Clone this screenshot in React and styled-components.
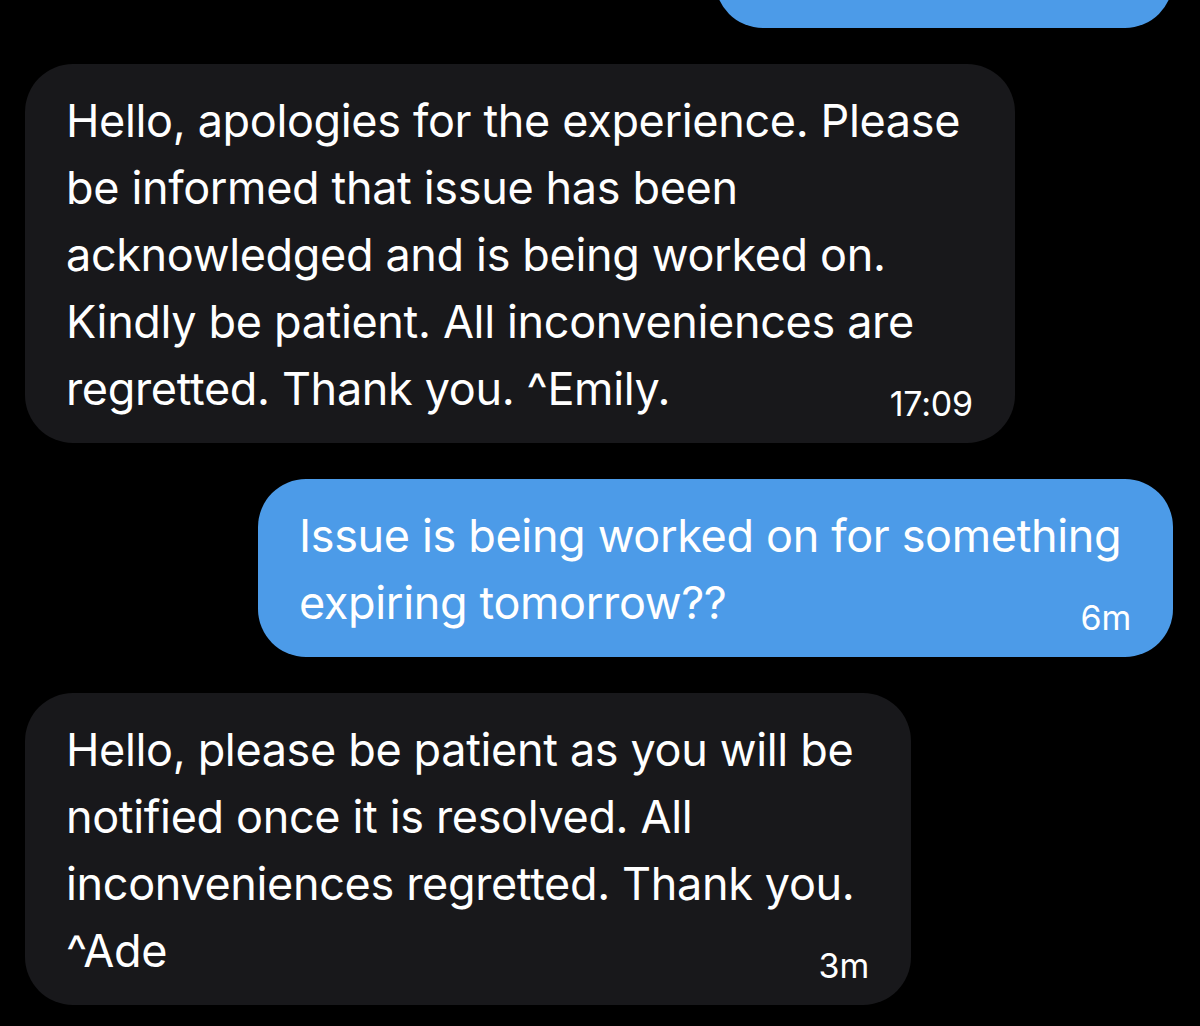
import React from 'react'
import styled, { createGlobalStyle } from 'styled-components'

const GlobalStyle = createGlobalStyle`
  html, body {
    margin: 0;
    padding: 0;
    background: #000;
  }
  body {
    font-family: Inter, "Noto Sans", sans-serif;
    -webkit-font-smoothing: antialiased;
  }
`

// chat is anchored to the bottom, older messages scroll off the top
const Screen = styled.div`
  height: 1026px;
  overflow: hidden;
  box-sizing: border-box;
  display: flex;
  flex-direction: column;
  justify-content: flex-end;
  gap: 36px;
  padding: 0 27px 21px 25px;
`

const Bubble = styled.div`
  flex-shrink: 0;
  align-self: ${(p) => (p.$mine ? 'flex-end' : 'flex-start')};
  width: ${(p) => p.$width}px;
  min-height: ${(p) => p.$minHeight || 0}px;
  box-sizing: border-box;
  padding: 23px 42px 21px 41px;
  border-radius: 48px;
  background: ${(p) => (p.$mine ? '#4c9be8' : '#18181b')};
  color: #fff;
`

const Line = styled.div`
  font-size: 45px;
  line-height: 67px;
  letter-spacing: -0.35px;
  white-space: nowrap;
`

const LastLine = styled(Line)`
  display: flex;
  justify-content: space-between;
  align-items: flex-end;
`

const Stamp = styled.span`
  font-size: 34px;
  line-height: 34px;
  letter-spacing: -0.2px;
  margin-bottom: 1px;
`

const Message = ({ mine, width, lines, time }) => {
  const body = lines.slice(0, -1)
  const last = lines[lines.length - 1]
  return (
    <Bubble $mine={mine} $width={width}>
      {body.map((l) => (
        <Line key={l}>{l}</Line>
      ))}
      <LastLine>
        <span>{last}</span>
        <Stamp>{time}</Stamp>
      </LastLine>
    </Bubble>
  )
}

const messages = [
  {
    width: 990,
    time: '17:09',
    lines: [
      'Hello, apologies for the experience. Please',
      'be informed that issue has been',
      'acknowledged and is being worked on.',
      'Kindly be patient. All inconveniences are',
      'regretted. Thank you. ^Emily.'
    ]
  },
  {
    mine: true,
    width: 915,
    time: '6m',
    lines: ['Issue is being worked on for something', 'expiring tomorrow??']
  },
  {
    width: 886,
    time: '3m',
    lines: [
      'Hello, please be patient as you will be',
      'notified once it is resolved. All',
      'inconveniences regretted. Thank you.',
      '^Ade'
    ]
  }
]

const App = () => (
  <>
    <GlobalStyle />
    <Screen>
      <Bubble $mine $width={458} $minHeight={130} />
      {messages.map((m) => (
        <Message key={m.time} {...m} />
      ))}
    </Screen>
  </>
)

export default App
